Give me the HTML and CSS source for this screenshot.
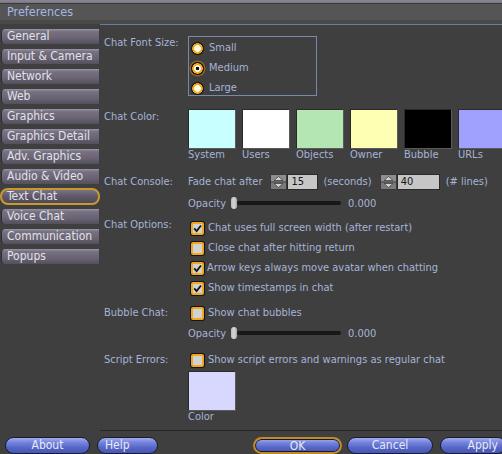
FILE: index.html
```html
<!DOCTYPE html>
<html>
<head>
<meta charset="utf-8">
<title>Preferences</title>
<link rel="stylesheet" href="styles.css">
</head>
<body>
<div class="win">
  <div class="topstrip"></div>
  <div class="titlebar"><span class="title">Preferences</span></div>
  <div class="titleshadow"></div>
  <div class="main">
    <nav class="tabs">
      <div class="tab">General</div>
      <div class="tab">Input &amp; Camera</div>
      <div class="tab">Network</div>
      <div class="tab">Web</div>
      <div class="tab">Graphics</div>
      <div class="tab">Graphics Detail</div>
      <div class="tab">Adv. Graphics</div>
      <div class="tab">Audio &amp; Video</div>
      <div class="tab sel">Text Chat</div>
      <div class="tab">Voice Chat</div>
      <div class="tab">Communication</div>
      <div class="tab">Popups</div>
    </nav>
    <section class="panel">
      <div class="row r-font">
        <div class="lbl">Chat Font Size:</div>
        <div class="radiobox">
          <div class="ropt"><span class="radio"></span>Small</div>
          <div class="ropt"><span class="radio on"></span>Medium</div>
          <div class="ropt"><span class="radio"></span>Large</div>
        </div>
      </div>

      <div class="row r-color">
        <div class="lbl lbl-sw">Chat Color:</div>
        <div class="swatches">
          <div class="sw"><div class="chip c-system"></div><div class="swname">System</div></div>
          <div class="sw"><div class="chip c-users"></div><div class="swname">Users</div></div>
          <div class="sw"><div class="chip c-objects"></div><div class="swname">Objects</div></div>
          <div class="sw"><div class="chip c-owner"></div><div class="swname">Owner</div></div>
          <div class="sw"><div class="chip c-bubble"></div><div class="swname">Bubble</div></div>
          <div class="sw"><div class="chip c-urls"></div><div class="swname">URLs</div></div>
        </div>
      </div>

      <div class="row r-console">
        <div class="lbl">Chat Console:</div>
        <div class="val">
          <span class="txt">Fade chat after</span>
          <span class="spin">
            <svg width="17" height="16" viewBox="0 0 17 16"><rect x="0" y="0" width="17" height="16" fill="#3a3a3a"/><rect x="1" y="1" width="15" height="6.5" fill="#8e8e8e"/><rect x="1" y="8.5" width="15" height="6.5" fill="#7a7a7a"/><path d="M4 6.5 L8.5 2.5 L13 6.5 Z" fill="#d4d4d4" stroke="#404040" stroke-width="0.8"/><path d="M4 9.5 L8.5 13.5 L13 9.5 Z" fill="#d4d4d4" stroke="#404040" stroke-width="0.8"/></svg>
          </span>
          <span class="field f-sec">15</span>
          <span class="txt unit1">(seconds)</span>
          <span class="spin spin2">
            <svg width="17" height="16" viewBox="0 0 17 16"><rect x="0" y="0" width="17" height="16" fill="#3a3a3a"/><rect x="1" y="1" width="15" height="6.5" fill="#8e8e8e"/><rect x="1" y="8.5" width="15" height="6.5" fill="#7a7a7a"/><path d="M4 6.5 L8.5 2.5 L13 6.5 Z" fill="#d4d4d4" stroke="#404040" stroke-width="0.8"/><path d="M4 9.5 L8.5 13.5 L13 9.5 Z" fill="#d4d4d4" stroke="#404040" stroke-width="0.8"/></svg>
          </span>
          <span class="field f-lines">40</span>
          <span class="txt unit2">(# lines)</span>
        </div>
      </div>

      <div class="row r-opacity">
        <div class="lbl"></div>
        <div class="val">
          <span class="txt">Opacity</span>
          <span class="slider"><span class="thumb"></span><span class="track"></span></span>
          <span class="txt num">0.000</span>
        </div>
      </div>

      <div class="row r-options">
        <div class="lbl">Chat Options:</div>
        <div class="checks">
          <div class="copt"><span class="cb on"><svg width="9" height="9" viewBox="0 0 9 9"><path d="M1.2 4.4 L3.6 7 L8 1.5" fill="none" stroke="#111" stroke-width="1.8"/></svg></span>Chat uses full screen width (after restart)</div>
          <div class="copt"><span class="cb"></span>Close chat after hitting return</div>
          <div class="copt tight"><span class="cb on"><svg width="9" height="9" viewBox="0 0 9 9"><path d="M1.2 4.4 L3.6 7 L8 1.5" fill="none" stroke="#111" stroke-width="1.8"/></svg></span>Arrow keys always move avatar when chatting</div>
          <div class="copt"><span class="cb on"><svg width="9" height="9" viewBox="0 0 9 9"><path d="M1.2 4.4 L3.6 7 L8 1.5" fill="none" stroke="#111" stroke-width="1.8"/></svg></span>Show timestamps in chat</div>
        </div>
      </div>

      <div class="row r-bubble">
        <div class="lbl">Bubble Chat:</div>
        <div class="copt"><span class="cb"></span>Show chat bubbles</div>
      </div>

      <div class="row r-opacity2">
        <div class="lbl"></div>
        <div class="val">
          <span class="txt">Opacity</span>
          <span class="slider"><span class="thumb"></span><span class="track"></span></span>
          <span class="txt num">0.000</span>
        </div>
      </div>

      <div class="row r-script">
        <div class="lbl">Script Errors:</div>
        <div class="copt"><span class="cb"></span>Show script errors and warnings as regular chat</div>
      </div>

      <div class="row r-scolor">
        <div class="lbl"></div>
        <div class="sw"><div class="chip c-script"></div><div class="swname">Color</div></div>
      </div>
    </section>
  </div>
  <div class="bottom">
    <button class="btn b-about">About</button>
    <button class="btn b-help">Help</button>
    <button class="btn b-ok">OK</button>
    <button class="btn b-cancel">Cancel</button>
    <button class="btn b-apply">Apply</button>
  </div>
</div>
</body>
</html>
```

FILE: styles.css
```css
html, body {
  margin: 0;
  padding: 0;
  background: #3f3f3f;
}

.win {
  width: 502px;
  height: 454px;
  overflow: hidden;
  background: #3f3f3f;
  font-family: "DejaVu Sans Condensed", "DejaVu Sans", sans-serif;
  font-stretch: condensed;
  font-size: 11px;
  color: #a6b4d8;
}

.topstrip {
  height: 4px;
  background: linear-gradient(180deg, #8c8696 0%, #7a7482 100%);
  border-bottom: 1px solid #3a3a3a;
  box-sizing: border-box;
}

.titlebar {
  height: 16px;
  background: #555555;
  display: flex;
  align-items: center;
  padding-left: 7px;
}

.title {
  font-size: 12.5px;
  color: #a6b8e2;
  line-height: 16px;
}

.titleshadow {
  height: 4px;
  background: #4a4a4a;
}

.main {
  display: flex;
  height: 407px;
}

.tabs {
  flex: none;
  width: 100px;
  padding-top: 5px;
  display: flex;
  flex-direction: column;
  gap: 5px;
}

.tab {
  height: 15px;
  margin-left: 1px;
  box-sizing: border-box;
  border-radius: 4px 1px 1px 4px;
  background: linear-gradient(180deg, #9a94a4 0%, #767080 18%, #6a6474 60%, #544f5c 100%);
  border-left: 1px solid #2e2b33;
  border-right: 1px solid #3e3a44;
  color: #e2e2ea;
  font-size: 12px;
  line-height: 15px;
  padding-left: 5px;
  white-space: nowrap;
}

.tab.sel {
  margin-left: 0;
  height: 17px;
  margin-top: -1px;
  margin-bottom: -1px;
  border: 2px solid #c89a2c;
  border-radius: 8px;
  background: linear-gradient(180deg, #7a7286 0%, #5e5868 50%, #4e4958 100%);
  line-height: 13px;
  padding-left: 5px;
}

.panel {
  flex: 1;
  min-width: 0;
  overflow: hidden;
  box-sizing: border-box;
  border-top: 1px solid #6a7caa;
  border-bottom: 1px solid #262626;
  padding-left: 4px;
  display: flex;
  flex-direction: column;
}

.row {
  display: flex;
}

.lbl {
  width: 84px;
  flex: none;
  line-height: 14px;
  white-space: nowrap;
}

.val {
  display: flex;
  align-items: center;
  white-space: nowrap;
}

/* font size */
.r-font { margin-top: 11px; }

.radiobox {
  width: 129px;
  height: 60px;
  flex: none;
  box-sizing: border-box;
  border: 1px solid #7a88ac;
  padding-top: 1px;
}

.ropt {
  height: 20px;
  display: flex;
  align-items: center;
  gap: 5px;
  padding-left: 2px;
  line-height: 14px;
}

.radio {
  width: 13px;
  height: 13px;
  border-radius: 50%;
  flex: none;
  background: radial-gradient(circle, #fffbea 0 3px, #f4aa1c 3.7px 5px, #121212 5.6px);
}

.radio.on {
  background: radial-gradient(circle, #111 0 1.5px, #ffffff 2.1px 3px, #f4aa1c 3.7px 5px, #121212 5.6px);
  box-shadow: 0 0 0 1.5px #8e6222;
}

/* colors */
.r-color { margin-top: 13px; }
.lbl-sw { padding-top: 1px; }

.swatches {
  display: flex;
  gap: 6px;
  flex: none;
}

.sw {
  width: 48px;
  flex: none;
  display: flex;
  flex-direction: column;
}

.chip {
  width: 48px;
  height: 40px;
  box-sizing: border-box;
  border: 1px solid #5a5a5a;
  border-top-color: #2a2a2a;
  border-left-color: #2a2a2a;
}

.swname {
  line-height: 12px;
  white-space: nowrap;
}

.c-system { background: #c8ffff; }
.c-users { background: #ffffff; }
.c-objects { background: #b4e6b4; }
.c-owner { background: #ffffb4; }
.c-bubble { background: #000000; }
.c-urls { background: #a0a0ff; }
.c-script { background: #d8d8ff; }

/* console */
.r-console { margin-top: 12px; height: 17px; align-items: center; }

.spin {
  display: flex;
  margin-left: 8px;
}

.spin2 { margin-left: 8px; }

.field {
  height: 16px;
  box-sizing: border-box;
  background: #c6c6c6;
  border: 1px solid #2a2a2a;
  color: #151515;
  line-height: 14px;
  padding-left: 3px;
}

.f-sec { width: 31px; }
.f-lines { width: 43px; }
.unit1 { margin-left: 5px; }
.unit2 { margin-left: 6px; }

/* opacity */
.r-opacity { margin-top: 5px; height: 16px; align-items: center; }
.r-opacity2 { height: 20px; align-items: center; }

.slider {
  display: flex;
  align-items: center;
  margin-left: 5px;
  width: 110px;
}

.thumb {
  width: 6px;
  height: 12px;
  border-radius: 3px;
  background: linear-gradient(90deg, #b8b8b8, #d8d8d8 50%, #a8a8a8);
  flex: none;
}

.track {
  flex: 1;
  height: 4px;
  border-radius: 2px;
  background: #181818;
}

.num { margin-left: 7px; }

/* checkboxes */
.r-options { margin-top: 7px; }

.checks {
  display: flex;
  flex-direction: column;
}

.copt {
  height: 20px;
  display: flex;
  align-items: center;
  gap: 4px;
  padding-left: 3px;
  white-space: nowrap;
  line-height: 14px;
}

.copt.tight { gap: 3px; }

.cb {
  width: 13px;
  height: 13px;
  box-sizing: border-box;
  border: 2px solid #f0a820;
  border-radius: 2px;
  box-shadow: 0 0 0 1px #141414;
  background: #d2d2d2;
  flex: none;
  display: flex;
  align-items: center;
  justify-content: center;
}

.r-bubble { margin-top: 5px; align-items: center; }
.r-script { margin-top: 7px; align-items: center; }
.r-scolor { margin-top: 1px; }

/* bottom buttons */
.bottom {
  display: flex;
  padding-top: 6px;
  height: 23px;
  box-sizing: border-box;
}

.btn {
  height: 17px;
  box-sizing: border-box;
  border: 1px solid #1a1a2c;
  border-radius: 9px;
  background: linear-gradient(180deg, #a2acee 0%, #7484dc 30%, #5666c8 65%, #4656b0 100%);
  color: #e8eaf6;
  font-family: "DejaVu Sans Condensed", "DejaVu Sans", sans-serif;
  font-stretch: condensed;
  font-size: 12px;
  line-height: 15px;
  padding: 0;
  margin: 0;
  flex: none;
}

.b-about { margin-left: 5px; width: 85px; text-align: center; }
.b-help { margin-left: 7px; width: 61px; text-align: left; padding-left: 7px; }
.b-ok {
  margin-left: 95px;
  width: 89px;
  text-align: center;
  border: 2px solid #c08a24;
  box-shadow: inset 0 0 0 1px #1a1a2c;
}
.b-cancel { margin-left: 5px; width: 86px; text-align: center; }
.b-apply { margin-left: 7px; width: 66px; text-align: right; padding-right: 7px; }
```
